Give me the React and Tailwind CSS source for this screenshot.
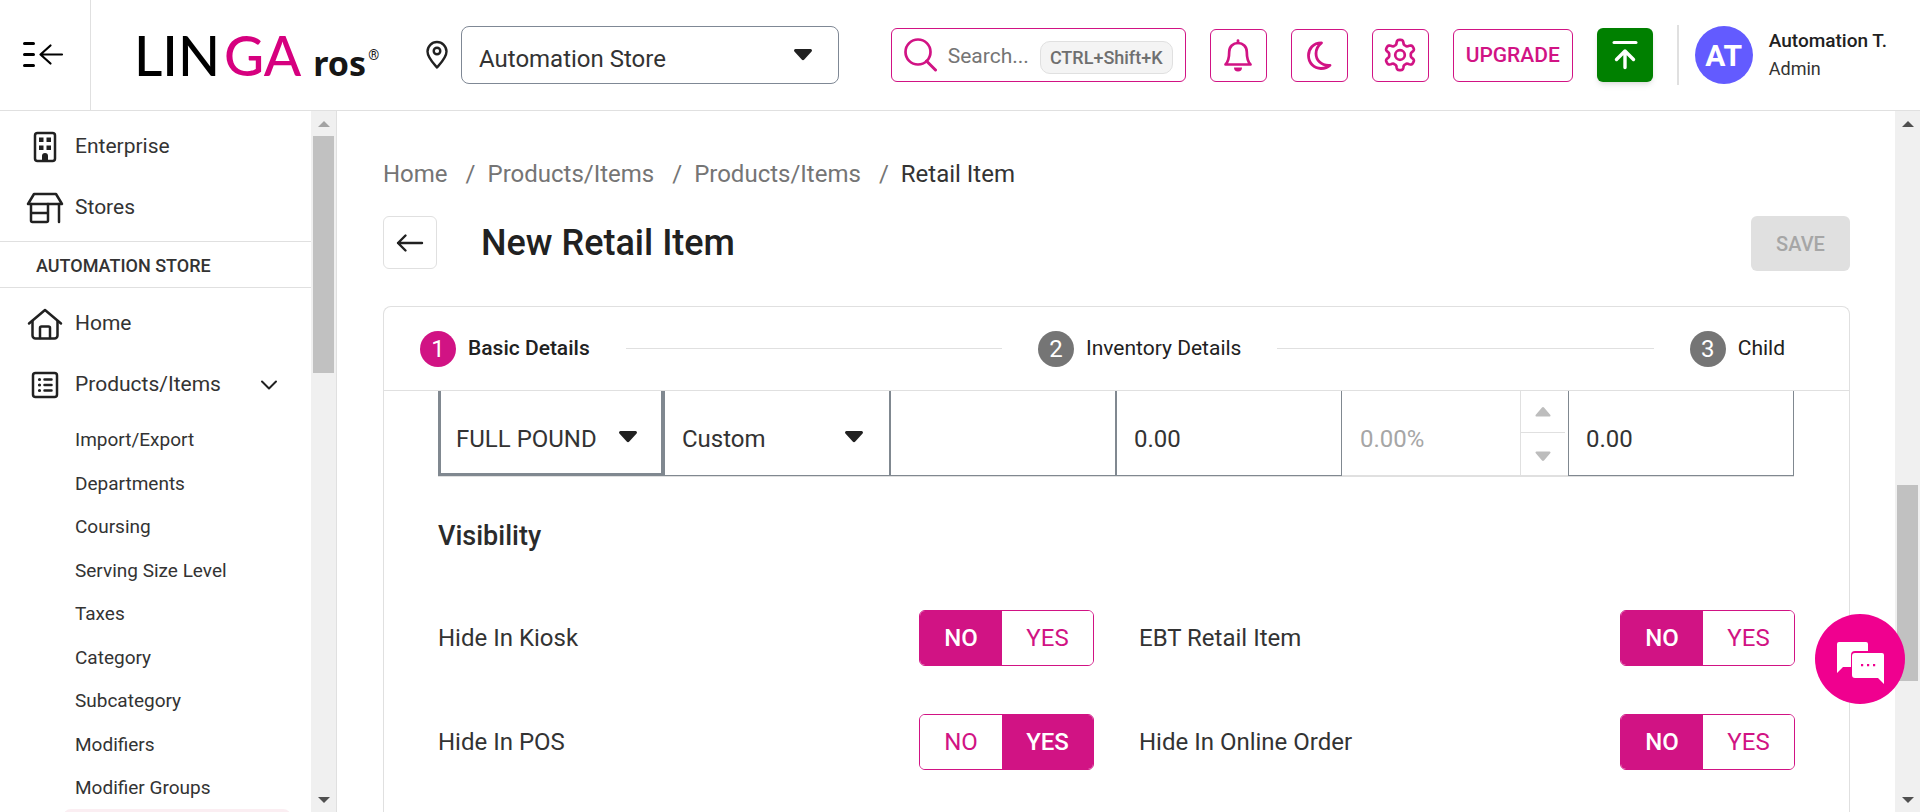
import { useState } from "react";

const subItems = [
  "Import/Export",
  "Departments",
  "Coursing",
  "Serving Size Level",
  "Taxes",
  "Category",
  "Subcategory",
  "Modifiers",
  "Modifier Groups",
];

const switches = [
  { label: "Hide In Kiosk", initial: "NO" },
  { label: "EBT Retail Item", initial: "NO" },
  { label: "Hide In POS", initial: "YES" },
  { label: "Hide In Online Order", initial: "NO" },
];

// Outline of a six-lobed gear centred on (17, 17).
const gearPoints = Array.from({ length: 120 }, (_, i) => {
  const angle = (i / 120) * Math.PI * 2;
  const radius = 13 + 2.3 * Math.tanh(2 * Math.cos(6 * angle));
  return `${(17 + radius * Math.sin(angle)).toFixed(2)},${(17 - radius * Math.cos(angle)).toFixed(2)}`;
}).join(" ");

function MenuIcon() {
  return (
    <svg width="42" height="28" viewBox="0 0 42 28" fill="none" stroke="#000" strokeLinecap="round" strokeLinejoin="round">
      <path d="M2.5 2.5h9M2.5 13.5h9M2.5 24.5h9" strokeWidth="3" />
      <path d="M40 13.5H19M28.500 4.500L18.500 13.500l10 9" strokeWidth="2.200" />
    </svg>
  );
}

function PinIcon() {
  return (
    <svg width="24" height="30" viewBox="0 0 24 30" fill="none" stroke="#212121" strokeWidth="2.400" strokeLinejoin="round">
      <path d="M12 27.500C8.500 23.500 2.500 17.500 2.500 11.500a9.500 9.500 0 0 1 19 0c0 6-6 12-9.500 16z" />
      <circle cx="12" cy="11" r="3.300" />
    </svg>
  );
}

function SearchIcon() {
  return (
    <svg width="34" height="34" viewBox="0 0 34 34" fill="none" stroke="#d11384" strokeLinecap="round">
      <circle cx="14" cy="14" r="12.500" strokeWidth="2.700" />
      <path d="M22.500 23l9 9" strokeWidth="3" />
    </svg>
  );
}

function BellIcon() {
  return (
    <svg width="30" height="34" viewBox="0 0 30 34" fill="none" stroke="#d11384" strokeWidth="2.700" strokeLinejoin="round" strokeLinecap="round">
      <path d="M2.500 26.500C5.500 23.500 6.200 20 6.200 14 6.200 8.500 10 5 15 5s8.800 3.500 8.800 9c0 6 .7 9.500 3.700 12.500z" />
      <path d="M15 2.500v2.500" />
      <path d="M11 29.500h8a4 4 0 0 1-8 0z" fill="#d11384" stroke="none" />
    </svg>
  );
}

function MoonIcon() {
  return (
    <svg width="30" height="34" viewBox="0 0 30 34" fill="none" stroke="#d11384" strokeWidth="2.800" strokeLinejoin="round">
      <path d="M17.500 4.800C9 4.800 4.500 11 4.500 17.500 4.500 25 10 30.500 17 30.500c4 0 7-1.200 9-3.200C17 28 12 22 12 15.500 12 11 14 7.500 17.500 4.800z" />
    </svg>
  );
}

function GearIcon() {
  return (
    <svg width="34" height="34" viewBox="0 0 34 34" fill="none" stroke="#d11384" strokeWidth="2.700" strokeLinejoin="round">
      <polygon points={gearPoints} />
      <circle cx="17" cy="17" r="4.800" />
    </svg>
  );
}

function UploadIcon() {
  return (
    <svg width="28" height="30" viewBox="0 0 28 30" fill="none" stroke="#fff" strokeWidth="3" strokeLinecap="round" strokeLinejoin="round">
      <path d="M3 2.500h22" />
      <path d="M14 27.500V11M5.500 19.500L14 11l8.500 8.500" strokeWidth="3.400" />
    </svg>
  );
}

function BackIcon() {
  return (
    <svg width="28" height="20" viewBox="0 0 28 20" fill="none" stroke="#212121" strokeWidth="2.400" strokeLinecap="round" strokeLinejoin="round">
      <path d="M26 10H2M9.500 2.500L2 10l7.500 7.500" />
    </svg>
  );
}

function EnterpriseIcon() {
  return (
    <svg width="38" height="32" viewBox="0 0 38 32" fill="none" stroke="#212121" strokeWidth="2.500">
      <rect x="9" y="2" width="20" height="28" rx="2.500" />
      <path d="M13 6.500h4.500v4.500H13zM20.500 6.500H25v4.500h-4.500zM13 14.500h4.500V19H13zM20.500 14.500H25V19h-4.500zM16 30v-5a3 3 0 0 1 6 0v5z" fill="#212121" stroke="none" />
    </svg>
  );
}

function StoresIcon() {
  return (
    <svg width="38" height="32" viewBox="0 0 38 32" fill="none" stroke="#212121" strokeWidth="2.500" strokeLinejoin="round" strokeLinecap="round">
      <path d="M8 2h22l6 10H2z" />
      <path d="M5 12v16.500a1.500 1.500 0 0 0 1.500 1.500h14a1.500 1.500 0 0 0 1.500-1.500V12M5 21h17M33 12v18" />
    </svg>
  );
}

function HomeIcon() {
  return (
    <svg width="38" height="32" viewBox="0 0 38 32" fill="none" stroke="#212121" strokeWidth="2.500" strokeLinejoin="round" strokeLinecap="round">
      <path d="M3 15.500L19 2l16 13.500" />
      <path d="M6.500 13v14.500a3 3 0 0 0 3 3h19a3 3 0 0 0 3-3V13" />
      <path d="M14 30V20a1.500 1.500 0 0 1 1.500-1.500h7A1.500 1.500 0 0 1 24 20v10" />
    </svg>
  );
}

function ListIcon() {
  return (
    <svg width="38" height="32" viewBox="0 0 38 32" fill="none" stroke="#212121" strokeWidth="2.500" strokeLinecap="round">
      <rect x="7" y="4" width="24" height="24" rx="2.500" />
      <path d="M18.500 10.500h7M18.500 16h7M18.500 21.500h7" />
      <path d="M13.500 10.500h.010M13.500 16h.010M13.500 21.500h.010" strokeWidth="3.200" />
    </svg>
  );
}

function Caret({ place }) {
  return (
    <svg className={`pointer-events-none absolute -translate-y-1/2 ${place}`} width="20" height="12" viewBox="0 0 20 12" fill="#212121">
      <path d="M2.500 0h15a1.500 1.500 0 0 1 1.100 2.500l-7.300 8a1.800 1.800 0 0 1-2.600 0l-7.300-8A1.500 1.500 0 0 1 2.500 0z" />
    </svg>
  );
}

function SpinArrow({ down }) {
  return (
    <svg className={down ? "rotate-180" : ""} width="16" height="10" viewBox="0 0 16 10" fill="#bdbdbd">
      <path d="M1.500 9.500h13a1 1 0 0 0 .700-1.700l-6-7a1.600 1.600 0 0 0-2.400 0l-6 7a1 1 0 0 0 .700 1.700z" />
    </svg>
  );
}

function ScrollBar({ before, thumb, after, dimUp }) {
  return (
    <div aria-hidden="true" className="flex w-[25px] shrink-0 flex-col items-center bg-[#f0f0f0]">
      <div className="flex h-[25px] items-center">
        <svg width="12" height="6" viewBox="0 0 12 6" fill={dimUp ? "#a3a3a3" : "#505050"}>
          <path d="M6 0l6 6H0z" />
        </svg>
      </div>
      <div style={{ flexGrow: before }} />
      <div className="w-[21px] bg-[#c1c1c1]" style={{ flexGrow: thumb }} />
      <div style={{ flexGrow: after }} />
      <div className="flex h-[25px] items-center">
        <svg width="12" height="6" viewBox="0 0 12 6" fill="#505050">
          <path d="M6 6l6-6H0z" />
        </svg>
      </div>
    </div>
  );
}

function Header() {
  const iconButton = "flex h-[53px] w-[57px] items-center justify-center rounded-md border border-[#d11384]";
  return (
    <header className="flex h-[111px] shrink-0 items-center border-b border-[#e0e0e0]">
      <button aria-label="Collapse menu" className="flex w-[91px] items-center justify-center self-stretch border-r border-[#e0e0e0] pr-1">
        <MenuIcon />
      </button>
      <a href="#" className="ml-[43px] flex w-[243px] items-baseline leading-none">
        <span className="font-['Lato',sans-serif] text-[55px] font-medium text-black">
          LIN<span className="ml-1 text-[#d6007f]">GA</span>
        </span>
        <span className="ml-3 font-['Noto_Sans',sans-serif] text-[34px] font-bold text-[#161616]">ros</span>
        <span className="ml-[2px] self-center text-sm text-[#161616]">®</span>
      </a>
      <div className="ml-12 flex items-center gap-3">
        <PinIcon />
        <div className="relative">
          <select aria-label="Store" className="h-[58px] w-[378px] appearance-none rounded-lg border border-[#7f8895] bg-white pl-[17px] pr-12 pt-2 text-2xl text-[#333]">
            <option>Automation Store</option>
          </select>
          <Caret place="right-[26px] top-1/2" />
        </div>
      </div>
      <div className="ml-auto flex items-center gap-6 pr-[33px]">
        <label className="flex h-[54px] w-[295px] items-center rounded-md border border-[#d11384] px-3">
          <SearchIcon />
          <input type="text" aria-label="Search" placeholder="Search..." className="ml-[10px] w-[92px] min-w-0 bg-transparent pt-[3px] text-[21px] text-[#333] outline-none placeholder:text-[#757575]" />
          <kbd className="mt-1 flex h-[33px] w-[133px] shrink-0 items-center justify-center rounded-[10px] border border-[#e0e0e0] bg-[#f4f4f4] pt-px font-['Roboto',sans-serif] text-lg font-medium text-[#6f6f6f]">CTRL+Shift+K</kbd>
        </label>
        <button aria-label="Notifications" className={iconButton}><BellIcon /></button>
        <button aria-label="Dark mode" className={iconButton}><MoonIcon /></button>
        <button aria-label="Settings" className={iconButton}><GearIcon /></button>
        <button className="h-[53px] w-[120px] rounded-md border border-[#d11384] pt-[2px] text-[21px] font-medium text-[#d11384]">UPGRADE</button>
        <button aria-label="Publish" className="flex h-[54px] w-14 items-center justify-center rounded-md bg-[#008000] shadow-md"><UploadIcon /></button>
        <div className="flex items-center gap-4">
          <span className="h-[60px] w-[2px] bg-[#e0e0e0]" />
          <span className="flex h-[58px] w-[58px] items-center justify-center rounded-full bg-[#635bff] text-[30px] font-bold text-white">AT</span>
          <span className="flex flex-col">
            <span className="text-[19px] leading-7 font-medium text-[#212121]">Automation T.</span>
            <span className="text-lg leading-7 text-[#333]">Admin</span>
          </span>
        </div>
      </div>
    </header>
  );
}

function NavItem({ icon, children, chevron }) {
  return (
    <a href="#" className="flex h-[61px] items-center pl-[26px] pr-[33px] text-[21px] text-[#333]">
      <span className="w-[49px] shrink-0">{icon}</span>
      {children}
      {chevron && (
        <svg className="ml-auto" width="18" height="10" viewBox="0 0 18 10" fill="none" stroke="#212121" strokeWidth="2" strokeLinecap="round" strokeLinejoin="round">
          <path d="M2 1.500l7 7 7-7" />
        </svg>
      )}
    </a>
  );
}

function Sidebar() {
  return (
    <aside className="flex w-[337px] shrink-0 border-r border-[#e0e0e0]">
      <nav className="min-w-0 flex-1 overflow-y-auto [scrollbar-width:none]">
        <div className="pb-[3px] pt-[5px]">
          <NavItem icon={<EnterpriseIcon />}>Enterprise</NavItem>
          <NavItem icon={<StoresIcon />}>Stores</NavItem>
        </div>
        <h2 className="flex h-[47px] items-center border-y border-[#e0e0e0] pl-9 pt-[2px] text-lg font-medium text-[#333]">AUTOMATION STORE</h2>
        <div className="pt-[5px]">
          <NavItem icon={<HomeIcon />}>Home</NavItem>
          <NavItem icon={<ListIcon />} chevron>Products/Items</NavItem>
        </div>
        <ul className="mt-[3px] grid h-[391px] auto-rows-fr text-[19px] text-[#333]">
          {subItems.map((item) => (
            <li key={item} className="flex items-center pl-[75px] pt-[2px]">
              <a href="#">{item}</a>
            </li>
          ))}
        </ul>
        <a href="#" aria-label="Current section" className="ml-[63px] mr-5 block h-[44px] rounded-lg bg-[#fbeef2]" />
      </nav>
      <ScrollBar before={0} thumb={237} after={414} dimUp />
    </aside>
  );
}

function Step({ number, label, active }) {
  return (
    <li className="flex shrink-0 items-center gap-3">
      <span className={`flex h-9 w-9 items-center justify-center rounded-full text-2xl text-white ${active ? "bg-[#d11384]" : "bg-[#757575]"}`}>{number}</span>
      <span className={`text-[21px] text-[#212121] ${active ? "font-medium" : "font-normal"}`}>{label}</span>
    </li>
  );
}

function StepLine() {
  return <li aria-hidden="true" className="mx-9 h-px flex-1 bg-[#e0e0e0]" />;
}

function YesNo({ label, initial }) {
  const [value, setValue] = useState(initial);
  const on = "bg-[#d11384] font-medium text-white";
  const off = "bg-white text-[#d11384]";
  return (
    <div className="flex h-14 items-center justify-between text-2xl">
      <span className="text-[#333]">{label}</span>
      <div role="group" aria-label={label} className="flex h-14 overflow-hidden rounded-md border border-[#d11384]">
        <button aria-pressed={value === "NO"} onClick={() => setValue("NO")} className={`w-[82px] ${value === "NO" ? on : off}`}>NO</button>
        <button aria-pressed={value === "YES"} onClick={() => setValue("YES")} className={`w-[91px] ${value === "YES" ? on : off}`}>YES</button>
      </div>
    </div>
  );
}

function PriceTable() {
  const field = "h-full w-full appearance-none bg-white pl-[17px] pt-[11px] text-2xl text-[#333] outline-none";
  const cell = "border border-t-0 border-[#808890] p-0";
  return (
    <div className="pr-px">
      <table className="h-[86px] w-full table-fixed border-separate border-spacing-0 border-b border-[#e0e0e0]">
        <tbody>
          <tr className="h-[85px]">
            <td className="h-[85px] border-[3px] border-t-0 border-[#808890] p-0">
              <div className="relative h-full">
                <select aria-label="Serving size" className="h-full w-full appearance-none bg-white pl-[15px] pt-[14px] text-2xl text-[#333] outline-none">
                  <option>FULL POUND</option>
                </select>
                <Caret place="right-[23px] top-[46px]" />
              </div>
            </td>
            <td className={cell}>
              <div className="relative h-full">
                <select aria-label="Price type" className={field}>
                  <option>Custom</option>
                </select>
                <Caret place="right-[25px] top-[46px]" />
              </div>
            </td>
            <td className={cell}>
              <input aria-label="Code" className={field} />
            </td>
            <td className={cell}>
              <input aria-label="Cost" defaultValue="0.00" className={field} />
            </td>
            <td className="border-b border-[#e0e0e0] p-0">
              <div className="flex h-full">
                <input aria-label="Margin" disabled defaultValue="0.00%" className="h-full min-w-0 flex-1 bg-white pl-[18px] pt-[11px] text-2xl text-[#a6a6a6]" />
                <div className="mr-[3px] flex w-[45px] flex-col border-l border-[#e0e0e0]">
                  <button disabled aria-label="Increase" className="flex h-[42px] items-center justify-center border-b border-[#e0e0e0]"><SpinArrow /></button>
                  <button disabled aria-label="Decrease" className="flex flex-1 items-center justify-center pt-1"><SpinArrow down /></button>
                </div>
              </div>
            </td>
            <td className={cell}>
              <input aria-label="Price" defaultValue="0.00" className={field} />
            </td>
          </tr>
        </tbody>
      </table>
    </div>
  );
}

function Slash() {
  return <span className="ml-[18px] mr-3">/</span>;
}

function Crumbs() {
  return (
    <nav aria-label="Breadcrumb" className="flex h-7 items-center text-2xl text-[#757575]">
      <a href="#">Home</a>
      <Slash />
      <a href="#">Products/Items</a>
      <Slash />
      <a href="#">Products/Items</a>
      <Slash />
      <span className="text-[#333]">Retail Item</span>
    </nav>
  );
}

export default function App() {
  return (
    <div className="flex h-screen flex-col overflow-hidden bg-white font-['Roboto',sans-serif]">
      <Header />
      <div className="flex min-h-0 flex-1">
        <Sidebar />
        <main className="flex min-w-0 flex-1 flex-col overflow-hidden pl-[46px] pr-[45px] pt-[49px]">
          <Crumbs />
          <div className="mt-7 flex h-[55px] items-start">
            <button aria-label="Back" className="flex h-[53px] w-[54px] items-center justify-center rounded-md border border-[#e0e0e0] pt-px"><BackIcon /></button>
            <h1 className="ml-11 text-4xl leading-[55px] font-medium text-[#212121]">New Retail Item</h1>
            <button disabled className="ml-auto h-[55px] w-[99px] rounded-md bg-[#e0e0e0] text-xl font-medium text-[#a6a6a6]">SAVE</button>
          </div>
          <section className="mt-[35px] flex-1 rounded-t-lg border border-b-0 border-[#e0e0e0]">
            <ol className="flex h-[84px] items-center border-b border-[#e0e0e0] pl-9 pr-16">
              <Step number="1" label="Basic Details" active />
              <StepLine />
              <Step number="2" label="Inventory Details" />
              <StepLine />
              <Step number="3" label="Child" />
            </ol>
            <div className="px-[54px]">
              <PriceTable />
              <h2 className="mt-[41px] text-[27px] leading-9 font-medium text-[#2b2b2b]">Visibility</h2>
              <div className="mt-14 grid grid-cols-2 gap-x-[45px] gap-y-12">
                {switches.map((s) => (
                  <YesNo key={s.label} {...s} />
                ))}
              </div>
            </div>
          </section>
        </main>
        <ScrollBar before={349} thumb={196} after={106} />
      </div>
      <button aria-label="Chat" className="fixed bottom-[108px] right-[15px] h-[90px] w-[90px] rounded-full bg-[#f0008f]">
        <svg width="90" height="90" viewBox="0 0 90 90" fill="#fff">
          <path d="M24 28h27a2 2 0 0 1 2 2v7H40a4 4 0 0 0-4 4v12h-8l-6 6V30a2 2 0 0 1 2-2z" />
          <path d="M40 39h27a2 2 0 0 1 2 2v29l-6-6H40a3 3 0 0 1-3-3V42a3 3 0 0 1 3-3z" />
          <path d="M46 50h2.200v2.200H46zM52 50h2.200v2.200H52zM58 50h2.200v2.200H58z" fill="#f0008f" />
        </svg>
      </button>
    </div>
  );
}
